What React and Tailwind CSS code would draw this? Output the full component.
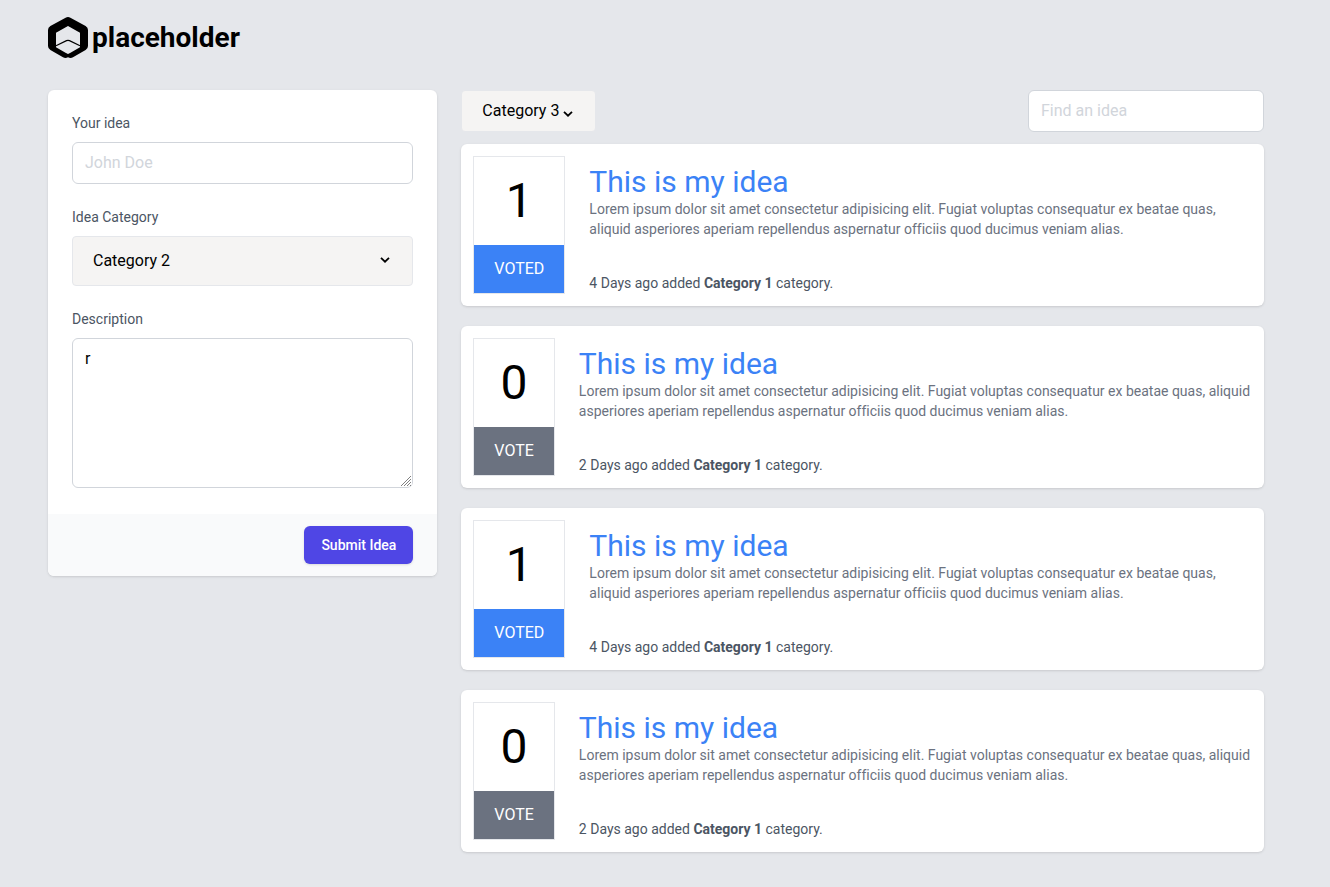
import React, { useState } from "react";

const CATEGORIES = ["Category 1", "Category 2", "Category 3"];

const IDEAS = [
  { id: 1, votes: 1, voted: true, days: 4 },
  { id: 2, votes: 0, voted: false, days: 2 },
  { id: 3, votes: 1, voted: true, days: 4 },
  { id: 4, votes: 0, voted: false, days: 2 },
];

function Chevron({ className }) {
  return (
    <svg viewBox="0 0 10 6" fill="none" aria-hidden="true" className={className}>
      <path d="M1 0.8L5 4.7L9 0.8" stroke="currentColor" strokeWidth="1.8" />
    </svg>
  );
}

function Logo() {
  return (
    <a href="#" className="flex w-fit items-center gap-1 text-black">
      <svg viewBox="0 0 40 42" aria-hidden="true" className="h-[42px] w-10">
        <path
          fillRule="evenodd"
          fill="currentColor"
          d="M17.6 0.7Q20 -0.5 22.4 0.7L37.6 9Q40 10.4 40 13V29Q40 31.6 37.6 33L25 40.3Q22.5 41.6 20 40.2Q17.5 41.6 15 40.3L2.400 33Q0 31.6 0 29V13Q0 10.4 2.400 9ZM20 9L8 15.800V30.200L17.500 35.800L20 37L22.500 35.800L32 30.200V15.800Z"
        />
        <path
          d="M8 28.800L18.500 23.600Q20 23 21.500 23.600L32 28.800"
          fill="none"
          stroke="currentColor"
          strokeWidth="1.2"
        />
      </svg>
      <span className="font-['Roboto',sans-serif] text-[28px] leading-8 font-bold">placeholder</span>
    </a>
  );
}

function ResizeGrip() {
  return (
    <svg
      viewBox="0 0 12 12"
      aria-hidden="true"
      className="pointer-events-none absolute right-px bottom-px h-3 w-3"
    >
      <path d="M0 11V0H12V8Q12 11 8 11Z" fill="#fff" />
      <path d="M1 11L11 1M4 11L11 4M7 11L11 7M10 11L11 10" stroke="#808080" strokeWidth="1" />
    </svg>
  );
}

function Select({ id, value, onChange, className, chevronClassName, label }) {
  return (
    <div className="relative">
      <select
        id={id}
        aria-label={label}
        value={value}
        onChange={(e) => onChange(e.target.value)}
        className={"appearance-none border border-[#e5e7eb] bg-[#f5f4f3] pl-5 text-base text-black " + className}
      >
        {CATEGORIES.map((c) => (
          <option key={c}>{c}</option>
        ))}
      </select>
      <Chevron className={"pointer-events-none absolute h-[6px] w-[10px] text-black " + chevronClassName} />
    </div>
  );
}

function Label({ htmlFor, children }) {
  return (
    <label htmlFor={htmlFor} className="mb-[9px] block text-sm leading-5 text-[#4b5563]">
      {children}
    </label>
  );
}

function IdeaForm() {
  const [category, setCategory] = useState("Category 2");
  return (
    <form
      onSubmit={(e) => e.preventDefault()}
      className="self-start overflow-hidden rounded-md bg-white shadow"
    >
      <div className="flex flex-col gap-[23px] px-6 pt-[23px] pb-[26px]">
        <div>
          <Label htmlFor="idea">Your idea</Label>
          <input
            id="idea"
            type="text"
            placeholder="John Doe"
            className="block w-full rounded-md border border-[#d1d5db] px-3 py-2 placeholder:text-[#d1d5db]"
          />
        </div>
        <div>
          <Label htmlFor="category">Idea Category</Label>
          <Select
            id="category"
            value={category}
            onChange={setCategory}
            className="h-[50px] w-full rounded"
            chevronClassName="right-[23px] top-[21px]"
          />
        </div>
        <div>
          <Label htmlFor="description">Description</Label>
          <div className="relative">
            <textarea
              id="description"
              defaultValue="r"
              className="block h-[150px] w-full resize-y rounded-md border border-[#d1d5db] px-3 py-2"
            />
            <ResizeGrip />
          </div>
        </div>
      </div>
      <div className="flex justify-end bg-[#f9fafb] px-6 py-3">
        <button
          type="submit"
          className="rounded-md border border-transparent bg-[#4f46e5] px-4 py-2 text-sm font-medium text-white shadow-sm"
        >
          Submit Idea
        </button>
      </div>
    </form>
  );
}

function IdeaCard({ idea }) {
  return (
    <article className="flex gap-6 rounded-md bg-white p-3 shadow">
      <div className="flex shrink-0 flex-col border border-[#e5e7eb]">
        <p className="p-5 text-center text-5xl leading-none text-black">{idea.votes}</p>
        <button
          type="button"
          className={"px-5 py-3 text-base text-white " + (idea.voted ? "bg-[#3b82f6]" : "bg-[#6b7280]")}
        >
          {idea.voted ? "VOTED" : "VOTE"}
        </button>
      </div>
      <div className="flex flex-col justify-between pt-[9px] pb-px">
        <div>
          <h2 className="text-3xl leading-[34px] text-[#3b82f6]">
            <a href="#">This is my idea</a>
          </h2>
          <p className="text-sm leading-5 text-[#6b7280] [font-variant-ligatures:none]">
            Lorem ipsum dolor sit amet consectetur adipisicing elit. Fugiat voluptas consequatur ex beatae quas,
            aliquid asperiores aperiam repellendus aspernatur officiis quod ducimus veniam alias.
          </p>
        </div>
        <p className="text-sm leading-5 text-[#4b5563]">
          {idea.days} Days ago added <strong className="font-bold">Category 1</strong> category.
        </p>
      </div>
    </article>
  );
}

export default function App() {
  const [filter, setFilter] = useState("Category 3");
  return (
    <div className="min-h-screen bg-[#e5e7eb] font-['Roboto',sans-serif] text-base text-black">
      <div className="max-w-7xl pt-[17px] pr-4 pb-8 pl-12">
        <header>
          <Logo />
        </header>
        <main className="mt-[31px] grid grid-cols-3 gap-6">
          <IdeaForm />
          <section className="col-span-2">
            <div className="flex items-center justify-between">
              <Select
                label="Filter by category"
                value={filter}
                onChange={setFilter}
                className="h-[42px] rounded pr-[35px]"
                chevronClassName="right-[23px] top-[21px]"
              />
              <input
                type="search"
                aria-label="Find an idea"
                placeholder="Find an idea"
                className="w-[236px] rounded-md border border-[#d1d5db] bg-white px-3 py-2 placeholder:text-[#d1d5db]"
              />
            </div>
            <div className="mt-3 flex flex-col gap-5">
              {IDEAS.map((idea) => (
                <IdeaCard key={idea.id} idea={idea} />
              ))}
            </div>
          </section>
        </main>
      </div>
    </div>
  );
}
